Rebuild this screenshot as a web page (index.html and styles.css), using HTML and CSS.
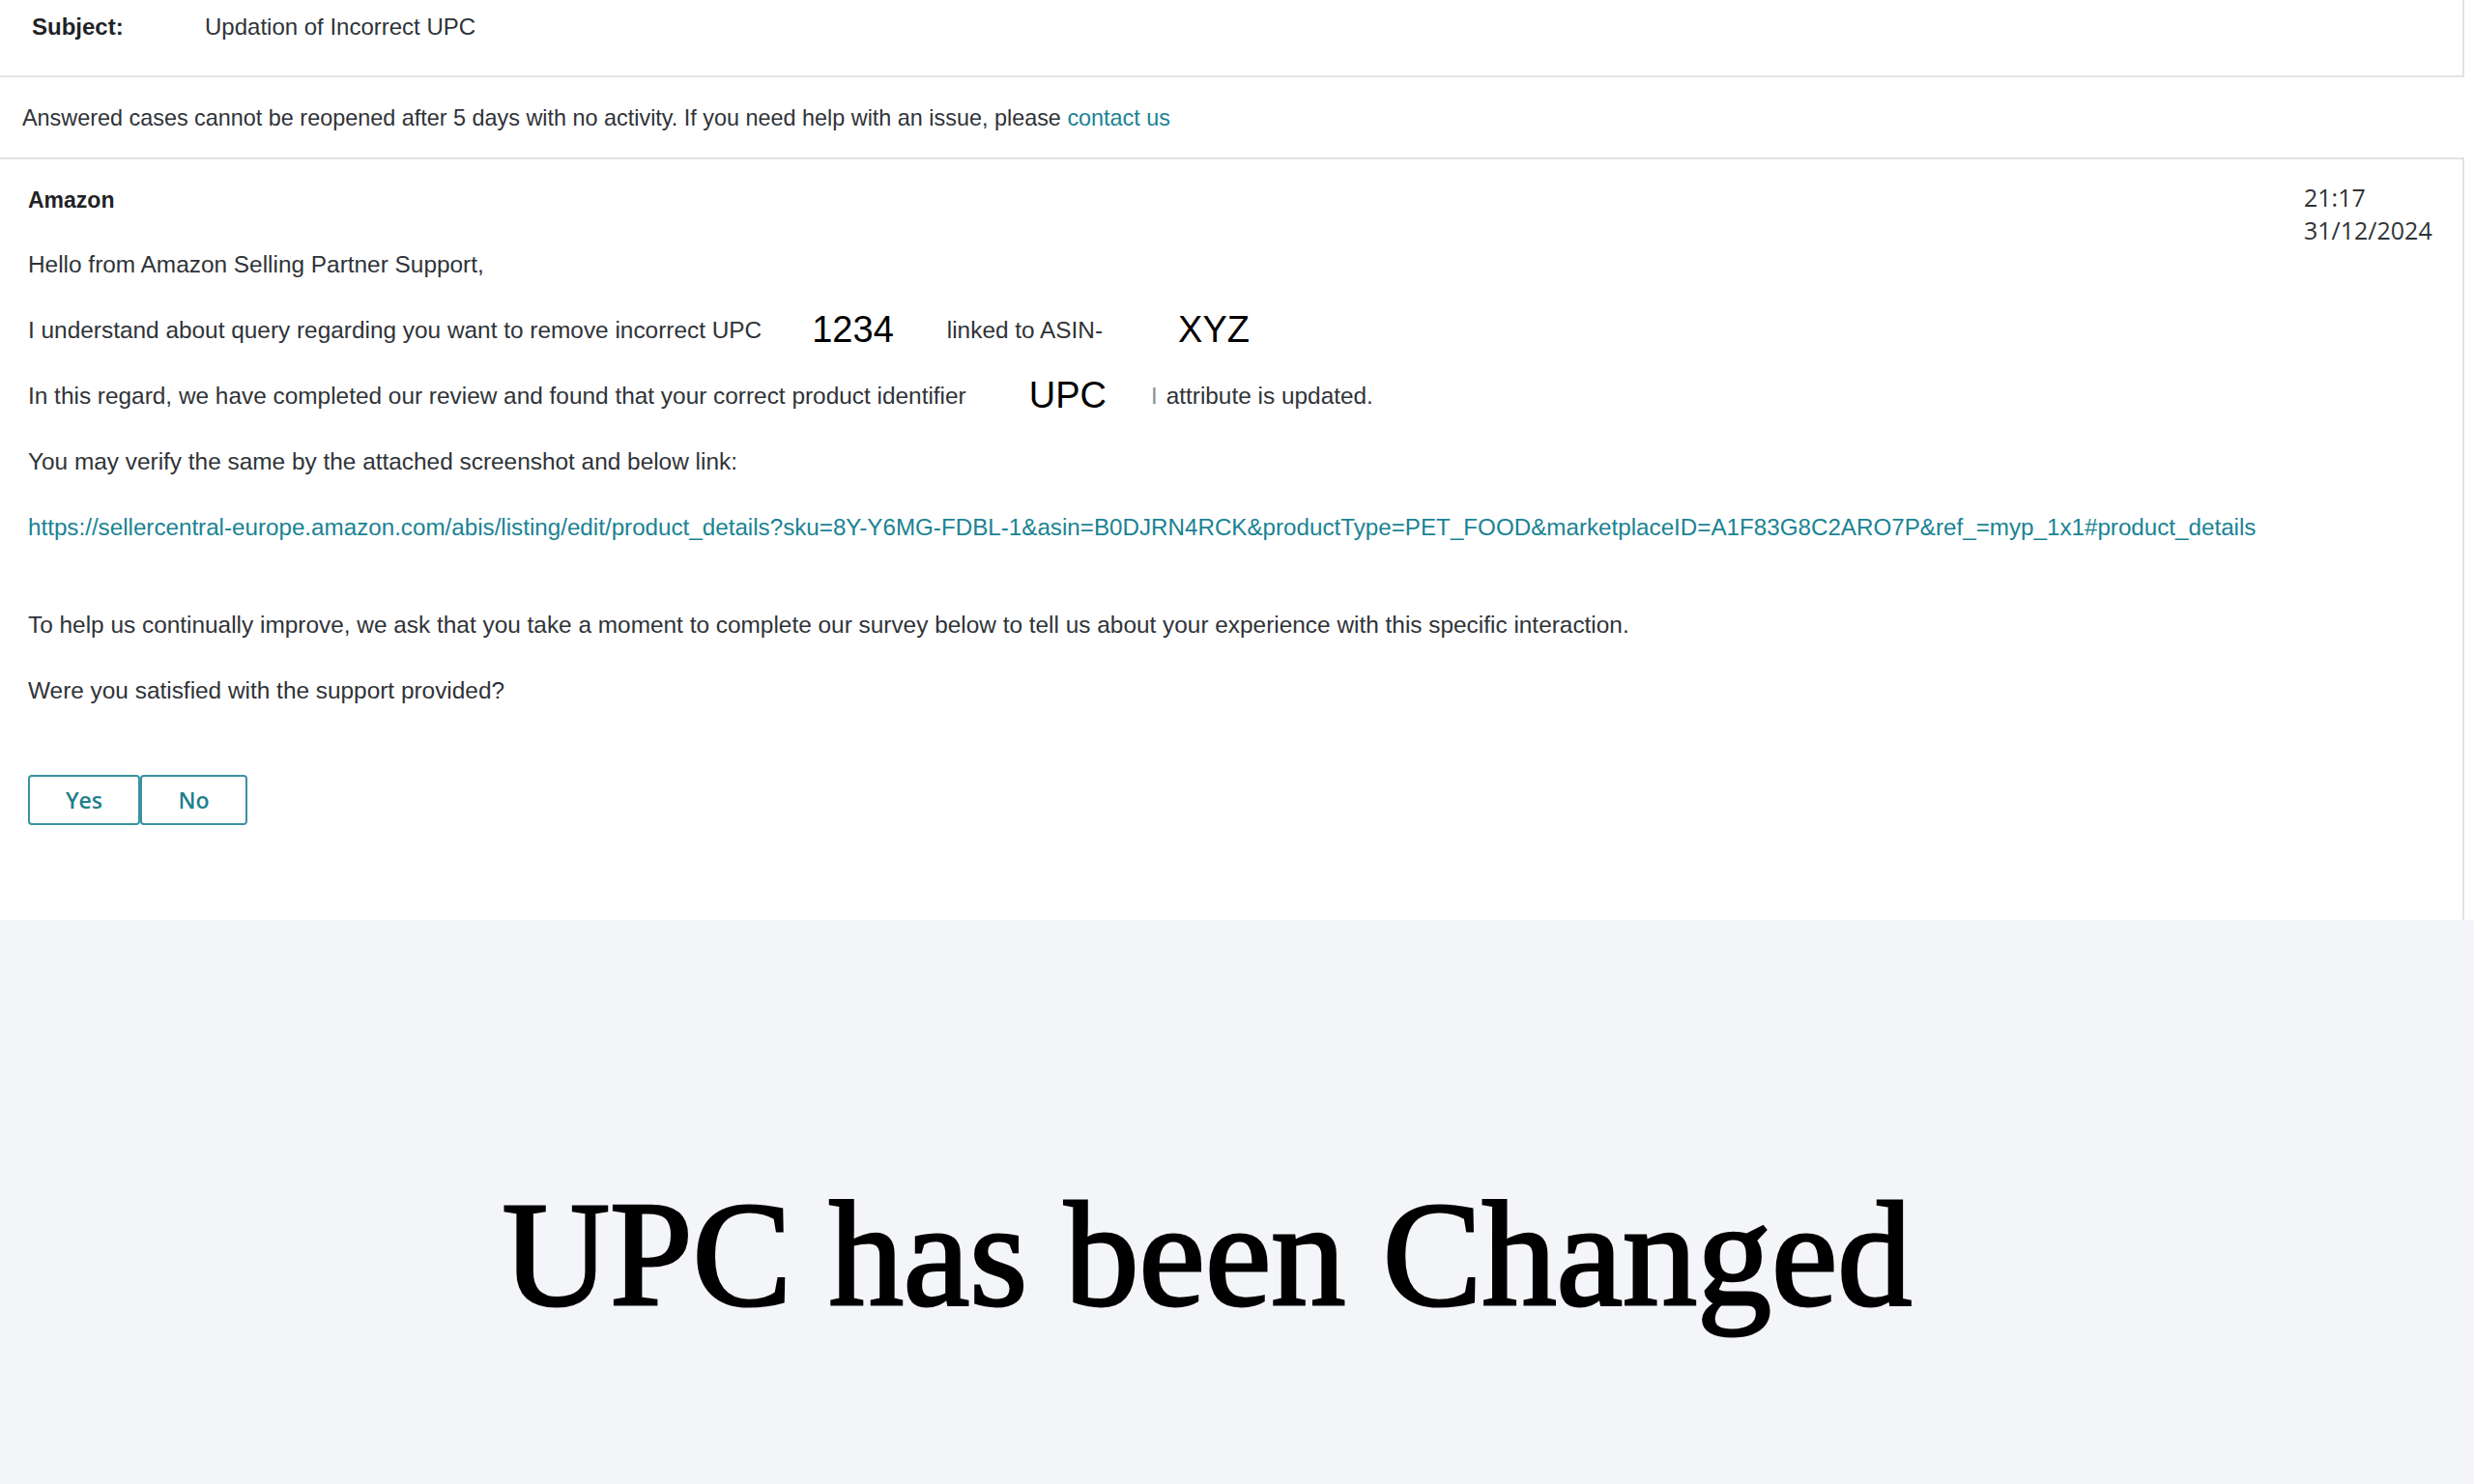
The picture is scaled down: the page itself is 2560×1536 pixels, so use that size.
FILE: index.html
```html
<!DOCTYPE html>
<html lang="en">
<head>
<meta charset="utf-8">
<title>Case</title>
<link rel="stylesheet" href="styles.css">
</head>
<body>
<div class="page">
  <div class="subject-box">
    <span class="subject-label">Subject:</span>
    <span class="subject-value">Updation of Incorrect UPC</span>
  </div>
  <div class="notice">
    <p class="notice-text">Answered cases cannot be reopened after 5 days with no activity. If you need help with an issue, please <a class="link" href="#">contact us</a></p>
  </div>
  <div class="message">
    <div class="msg-body">
      <p class="sender">Amazon</p>
      <p>Hello from Amazon Selling Partner Support,</p>
      <p>I understand about query regarding you want to remove incorrect UPC<span class="big big-1234">1234</span><span>linked to ASIN-</span><span class="big big-xyz">XYZ</span></p>
      <p>In this regard, we have completed our review and found that your correct product identifier<span class="big big-upc">UPC</span><span class="cursor">I</span>attribute is updated.</p>
      <p>You may verify the same by the attached screenshot and below link:</p>
      <p class="url"><a class="link" href="#">https://sellercentral-europe.amazon.com/abis/listing/edit/product_details?sku=8Y-Y6MG-FDBL-1&amp;asin=B0DJRN4RCK&amp;productType=PET_FOOD&amp;marketplaceID=A1F83G8C2ARO7P&amp;ref_=myp_1x1#product_details</a></p>
      <p>To help us continually improve, we ask that you take a moment to complete our survey below to tell us about your experience with this specific interaction.</p>
      <p>Were you satisfied with the support provided?</p>
      <div class="buttons">
        <button class="btn btn-yes">Yes</button><button class="btn btn-no">No</button>
      </div>
    </div>
    <div class="msg-date">
      <div>21:17</div>
      <div>31/12/2024</div>
    </div>
  </div>
  <div class="banner">
    <h1 class="headline">UPC has been Changed</h1>
  </div>
</div>
</body>
</html>
```

FILE: styles.css
```css
html, body {
  margin: 0;
  padding: 0;
  background: #ffffff;
}
body {
  width: 2560px;
  height: 1536px;
  overflow: hidden;
  font-family: "Liberation Sans", Arial, sans-serif;
  color: #2f3338;
}
.page {
  display: flex;
  flex-direction: column;
  height: 1536px;
}
.subject-box {
  width: 2550px;
  box-sizing: border-box;
  height: 80px;
  border-right: 2px solid #e2e2e2;
  border-bottom: 2px solid #e2e2e2;
  display: flex;
  align-items: center;
  padding: 0 0 22px 33px;
  font-size: 24px;
}
.subject-label {
  font-weight: bold;
  width: 179px;
  color: #1f2328;
}
.subject-value {
  color: #2f3338;
}
.notice {
  height: 83px;
  box-sizing: border-box;
  display: flex;
  align-items: center;
  padding: 0 0 0 23px;
}
.notice-text {
  margin: 0;
  font-size: 23.4px;
  line-height: 34px;
  white-space: nowrap;
}
.link {
  color: #1a8394;
  text-decoration: none;
}
.message {
  width: 2550px;
  box-sizing: border-box;
  height: 789px;
  border-top: 2px solid #e2e2e2;
  border-right: 2px solid #e2e2e2;
  display: flex;
  justify-content: space-between;
  padding: 25px 30px 0 29px;
}
.msg-body p {
  margin: 0 0 34px 0;
  line-height: 34px;
  font-size: 24.4px;
  white-space: nowrap;
}
.msg-body .sender {
  font-weight: bold;
  color: #1f2328;
  font-size: 23px;
  margin-bottom: 33px;
}
.msg-body .url {
  margin-bottom: 67px;
  font-size: 24.2px;
}
.big {
  font-size: 38px;
  line-height: 0;
  color: #000;
  vertical-align: -4px;
  font-family: "Liberation Sans Narrow", "Liberation Sans", sans-serif;
}
.big-1234 {
  margin-left: 52px;
  margin-right: 55px;
}
.big-xyz {
  margin-left: 78px;
}
.big-upc {
  margin-left: 65px;
  margin-right: 46px;
}
.cursor {
  color: #8c9197;
  font-size: 24px;
  line-height: 0;
  margin-right: 9px;
}
.buttons {
  display: flex;
  margin-top: 70px;
}
.btn {
  height: 52px;
  box-sizing: border-box;
  background: #fff;
  border: 2px solid #3a929f;
  border-radius: 4px;
  color: #1f7f8d;
  font-family: "Open Sans", "Liberation Sans", sans-serif;
  font-size: 23px;
  font-weight: 600;
  padding: 0;
}
.btn-yes {
  width: 116px;
}
.btn-no {
  width: 111px;
}
.msg-date {
  font-size: 25px;
  line-height: 34px;
  color: #2f3338;
  font-family: "Open Sans", "Liberation Sans", sans-serif;
  width: 134px;
  margin-top: -3px;
}
.banner {
  flex: 1;
  background: #f4f5f9;
  padding-top: 269px;
  padding-right: 62px;
  text-align: center;
}
.headline {
  margin: 0;
  font-family: "Liberation Serif", "Times New Roman", serif;
  font-weight: normal;
  font-size: 154px;
  line-height: 1;
  color: #000;
  -webkit-text-stroke: 3px #000;
}
```
